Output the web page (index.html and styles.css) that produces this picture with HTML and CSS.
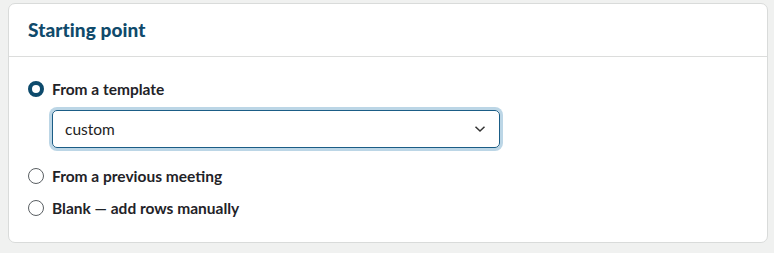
FILE: index.html
```html
<!DOCTYPE html>
<html>
<head>
<meta charset="utf-8">
<link rel="stylesheet" href="styles.css">
</head>
<body>
<section class="card">
  <header class="card-header">
    <h2 class="card-title">Starting point</h2>
  </header>
  <div class="card-body">
    <label class="option">
      <span class="radio radio-checked"></span>
      <span class="option-label">From a template</span>
    </label>
    <div class="select">
      <span class="select-value">custom</span>
      <svg class="chevron" width="12" height="8" viewBox="0 0 12 8"><path d="M1.5 1.8 L6 6 L10.5 1.8" fill="none" stroke="#333" stroke-width="1.5"/></svg>
    </div>
    <label class="option">
      <span class="radio"></span>
      <span class="option-label">From a previous meeting</span>
    </label>
    <label class="option">
      <span class="radio"></span>
      <span class="option-label">Blank — add rows manually</span>
    </label>
  </div>
</section>
</body>
</html>
```
FILE: styles.css
```css
html, body {
  margin: 0;
  padding: 0;
}
body {
  background: #f0f1f0;
  font-family: Lato, "Noto Sans", sans-serif;
  color: #222;
  padding: 3px 6px 0 8px;
}
.card {
  background: #fff;
  border: 1px solid #d9dbda;
  border-radius: 7px;
  height: 240px;
  box-sizing: border-box;
}
.card-header {
  height: 53px;
  box-sizing: border-box;
  border-bottom: 1px solid #dcdddc;
  padding: 0 19px 2px;
  display: flex;
  align-items: center;
}
.card-title {
  margin: 0;
  font-size: 19px;
  font-weight: 900;
  color: #0f4a6b;
  letter-spacing: 0.1px;
}
.card-body {
  padding: 20px 19px 0;
  display: flex;
  flex-direction: column;
}
.option {
  display: flex;
  align-items: center;
  gap: 8px;
  height: 24px;
  font-size: 15.5px;
  font-weight: 700;
  color: #1f2328;
}
.option + .option {
  margin-top: 8px;
}
.radio {
  width: 16px;
  height: 16px;
  box-sizing: border-box;
  border-radius: 50%;
  border: 1px solid #5a5f63;
  background: #fff;
  flex: none;
}
.radio-checked {
  border: 4.5px solid #0d4a6c;
}
.select {
  margin: 9px 0 16px 24px;
  width: 448px;
  height: 38px;
  box-sizing: border-box;
  border: 1px solid #1b5d86;
  border-radius: 5px;
  box-shadow: 0 0 0 3px #bcd6e6;
  display: flex;
  align-items: center;
  justify-content: space-between;
  padding: 0 13px 0 12px;
  font-size: 15.5px;
  color: #222;
}
.chevron {
  display: block;
}
```
